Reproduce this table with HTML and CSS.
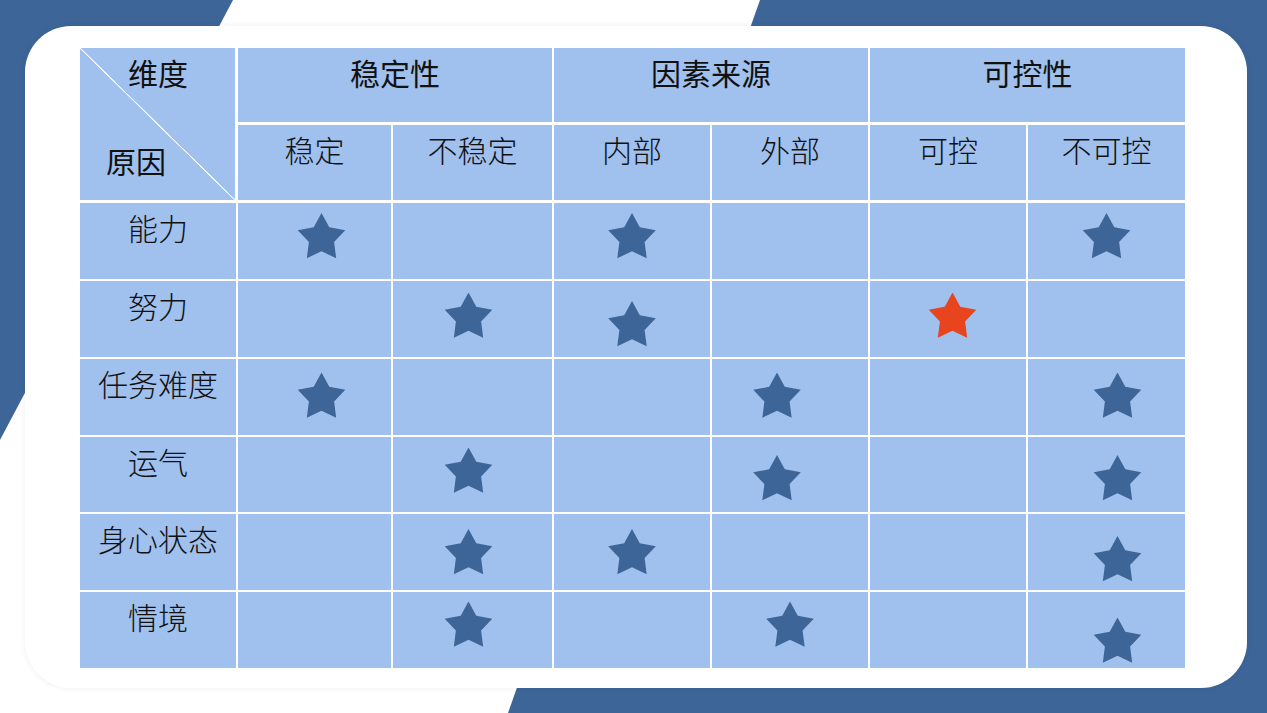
FILE: index.html
```html
<!DOCTYPE html>
<html lang="zh-CN">
<head>
<meta charset="utf-8">
<title>归因维度表</title>
<link rel="stylesheet" href="styles.css">
</head>
<body>
<div class="stage">
  <div class="card">
    <div class="grid">
      <div class="cell diag">
        <span class="diag-top">维度</span>
        <span class="diag-bottom">原因</span>
      </div>
      <div class="cell head span2">稳定性</div>
      <div class="cell head span2">因素来源</div>
      <div class="cell head span2">可控性</div>

      <div class="cell sub">稳定</div>
      <div class="cell sub">不稳定</div>
      <div class="cell sub">内部</div>
      <div class="cell sub">外部</div>
      <div class="cell sub">可控</div>
      <div class="cell sub">不可控</div>

      <div class="cell label">能力</div>
      <div class="cell mark" style="--dx:6.5px;--dy:-5px"><svg class="star" viewBox="0 0 48 46"><path d="M24 0 L31.79 14.28 L47.78 17.27 L36.6 29.09 L38.69 45.23 L24 38.25 L9.31 45.23 L11.4 29.09 L0.22 17.27 L16.21 14.28 Z"/></svg></div>
      <div class="cell"></div>
      <div class="cell mark" style="--dx:0px;--dy:-5px"><svg class="star" viewBox="0 0 48 46"><path d="M24 0 L31.79 14.28 L47.78 17.27 L36.6 29.09 L38.69 45.23 L24 38.25 L9.31 45.23 L11.4 29.09 L0.22 17.27 L16.21 14.28 Z"/></svg></div>
      <div class="cell"></div>
      <div class="cell"></div>
      <div class="cell mark" style="--dx:-0.5px;--dy:-5px"><svg class="star" viewBox="0 0 48 46"><path d="M24 0 L31.79 14.28 L47.78 17.27 L36.6 29.09 L38.69 45.23 L24 38.25 L9.31 45.23 L11.4 29.09 L0.22 17.27 L16.21 14.28 Z"/></svg></div>

      <div class="cell label">努力</div>
      <div class="cell"></div>
      <div class="cell mark" style="--dx:-4.5px;--dy:-3.5px"><svg class="star" viewBox="0 0 48 46"><path d="M24 0 L31.79 14.28 L47.78 17.27 L36.6 29.09 L38.69 45.23 L24 38.25 L9.31 45.23 L11.4 29.09 L0.22 17.27 L16.21 14.28 Z"/></svg></div>
      <div class="cell mark" style="--dx:0px;--dy:5px"><svg class="star" viewBox="0 0 48 46"><path d="M24 0 L31.79 14.28 L47.78 17.27 L36.6 29.09 L38.69 45.23 L24 38.25 L9.31 45.23 L11.4 29.09 L0.22 17.27 L16.21 14.28 Z"/></svg></div>
      <div class="cell"></div>
      <div class="cell mark" style="--dx:4.5px;--dy:-3.5px"><svg class="star red" viewBox="0 0 48 46"><path d="M24 0 L31.79 14.28 L47.78 17.27 L36.6 29.09 L38.69 45.23 L24 38.25 L9.31 45.23 L11.4 29.09 L0.22 17.27 L16.21 14.28 Z"/></svg></div>
      <div class="cell"></div>

      <div class="cell label">任务难度</div>
      <div class="cell mark" style="--dx:6.5px;--dy:-1.5px"><svg class="star" viewBox="0 0 48 46"><path d="M24 0 L31.79 14.28 L47.78 17.27 L36.6 29.09 L38.69 45.23 L24 38.25 L9.31 45.23 L11.4 29.09 L0.22 17.27 L16.21 14.28 Z"/></svg></div>
      <div class="cell"></div>
      <div class="cell"></div>
      <div class="cell mark" style="--dx:-13px;--dy:-1.5px"><svg class="star" viewBox="0 0 48 46"><path d="M24 0 L31.79 14.28 L47.78 17.27 L36.6 29.09 L38.69 45.23 L24 38.25 L9.31 45.23 L11.4 29.09 L0.22 17.27 L16.21 14.28 Z"/></svg></div>
      <div class="cell"></div>
      <div class="cell mark" style="--dx:10.5px;--dy:-1.5px"><svg class="star" viewBox="0 0 48 46"><path d="M24 0 L31.79 14.28 L47.78 17.27 L36.6 29.09 L38.69 45.23 L24 38.25 L9.31 45.23 L11.4 29.09 L0.22 17.27 L16.21 14.28 Z"/></svg></div>

      <div class="cell label">运气</div>
      <div class="cell"></div>
      <div class="cell mark" style="--dx:-4.5px;--dy:-4.5px"><svg class="star" viewBox="0 0 48 46"><path d="M24 0 L31.79 14.28 L47.78 17.27 L36.6 29.09 L38.69 45.23 L24 38.25 L9.31 45.23 L11.4 29.09 L0.22 17.27 L16.21 14.28 Z"/></svg></div>
      <div class="cell"></div>
      <div class="cell mark" style="--dx:-13px;--dy:3px"><svg class="star" viewBox="0 0 48 46"><path d="M24 0 L31.79 14.28 L47.78 17.27 L36.6 29.09 L38.69 45.23 L24 38.25 L9.31 45.23 L11.4 29.09 L0.22 17.27 L16.21 14.28 Z"/></svg></div>
      <div class="cell"></div>
      <div class="cell mark" style="--dx:10.5px;--dy:3px"><svg class="star" viewBox="0 0 48 46"><path d="M24 0 L31.79 14.28 L47.78 17.27 L36.6 29.09 L38.69 45.23 L24 38.25 L9.31 45.23 L11.4 29.09 L0.22 17.27 L16.21 14.28 Z"/></svg></div>

      <div class="cell label">身心状态</div>
      <div class="cell"></div>
      <div class="cell mark" style="--dx:-4.5px;--dy:0px"><svg class="star" viewBox="0 0 48 46"><path d="M24 0 L31.79 14.28 L47.78 17.27 L36.6 29.09 L38.69 45.23 L24 38.25 L9.31 45.23 L11.4 29.09 L0.22 17.27 L16.21 14.28 Z"/></svg></div>
      <div class="cell mark" style="--dx:0px;--dy:0px"><svg class="star" viewBox="0 0 48 46"><path d="M24 0 L31.79 14.28 L47.78 17.27 L36.6 29.09 L38.69 45.23 L24 38.25 L9.31 45.23 L11.4 29.09 L0.22 17.27 L16.21 14.28 Z"/></svg></div>
      <div class="cell"></div>
      <div class="cell"></div>
      <div class="cell mark" style="--dx:10.5px;--dy:7px"><svg class="star" viewBox="0 0 48 46"><path d="M24 0 L31.79 14.28 L47.78 17.27 L36.6 29.09 L38.69 45.23 L24 38.25 L9.31 45.23 L11.4 29.09 L0.22 17.27 L16.21 14.28 Z"/></svg></div>

      <div class="cell label">情境</div>
      <div class="cell"></div>
      <div class="cell mark" style="--dx:-4.5px;--dy:-5.5px"><svg class="star" viewBox="0 0 48 46"><path d="M24 0 L31.79 14.28 L47.78 17.27 L36.6 29.09 L38.69 45.23 L24 38.25 L9.31 45.23 L11.4 29.09 L0.22 17.27 L16.21 14.28 Z"/></svg></div>
      <div class="cell"></div>
      <div class="cell mark" style="--dx:0px;--dy:-5.5px"><svg class="star" viewBox="0 0 48 46"><path d="M24 0 L31.79 14.28 L47.78 17.27 L36.6 29.09 L38.69 45.23 L24 38.25 L9.31 45.23 L11.4 29.09 L0.22 17.27 L16.21 14.28 Z"/></svg></div>
      <div class="cell"></div>
      <div class="cell mark" style="--dx:10.5px;--dy:10.5px"><svg class="star" viewBox="0 0 48 46"><path d="M24 0 L31.79 14.28 L47.78 17.27 L36.6 29.09 L38.69 45.23 L24 38.25 L9.31 45.23 L11.4 29.09 L0.22 17.27 L16.21 14.28 Z"/></svg></div>
    </div>
  </div>
</div>
</body>
</html>
```

FILE: styles.css
```css
* { box-sizing: border-box; }

html, body {
  margin: 0;
  padding: 0;
  background: #ffffff;
}

body {
  font-family: "Noto Sans CJK SC", "Noto Sans", sans-serif;
  color: #111111;
}

.stage {
  position: relative;
  width: 1267px;
  height: 713px;
  overflow: hidden;
  background: #ffffff;
  padding: 26px 20px 25px 25px;
}

.stage::before,
.stage::after {
  content: "";
  position: absolute;
  inset: 0;
  background: #3d6598;
}

.stage::before {
  clip-path: polygon(0 0, 233px 0, 0 440px);
}

.stage::after {
  clip-path: polygon(760px 0, 1267px 0, 1267px 713px, 508px 713px);
}

.card {
  position: relative;
  z-index: 1;
  width: 1222px;
  height: 662px;
  background: #ffffff;
  border-radius: 46px;
  box-shadow: 0 0 6px rgba(0, 0, 0, 0.07);
  padding: 22px 62px 20px 55px;
}

.grid {
  display: grid;
  width: 1105px;
  grid-template-columns: 156px 153px 159px 156px 156px 156px 157px;
  grid-template-rows: 75px 76px 76px 76px 76px 75px 76px 76px;
  gap: 2px;
  background: #ffffff;
}

.cell {
  background: #a0c0ee;
  font-size: 30px;
  line-height: 36px;
  text-align: center;
  padding-top: 6px;
  font-weight: 300;
  white-space: nowrap;
}

.head {
  font-weight: 400;
  box-shadow: inset 0 -1px 0 #ffffff;
}

.span2 {
  grid-column: span 2;
}

.sub {
  box-shadow: inset 0 -1px 0 #ffffff;
}

.diag {
  grid-row: span 2;
  display: flex;
  flex-direction: column;
  align-items: stretch;
  font-weight: 400;
  box-shadow: inset -1px -1px 0 #ffffff;
  background:
    linear-gradient(to top right, transparent calc(50% - 0.8px), #ffffff calc(50% - 0.3px), #ffffff calc(50% + 0.3px), transparent calc(50% + 0.8px)),
    #a0c0ee;
}

.diag-top {
  text-align: center;
}

.diag-bottom {
  text-align: left;
  padding-left: 26px;
  margin-top: 52px;
}

.label {
  font-weight: 300;
}

.mark {
  display: flex;
  align-items: center;
  justify-content: center;
  padding-top: 0;
}

.star {
  width: 48px;
  height: 46px;
  fill: #3d6598;
  transform: translate(var(--dx), var(--dy));
}

.star.red {
  fill: #e8441e;
}
```
